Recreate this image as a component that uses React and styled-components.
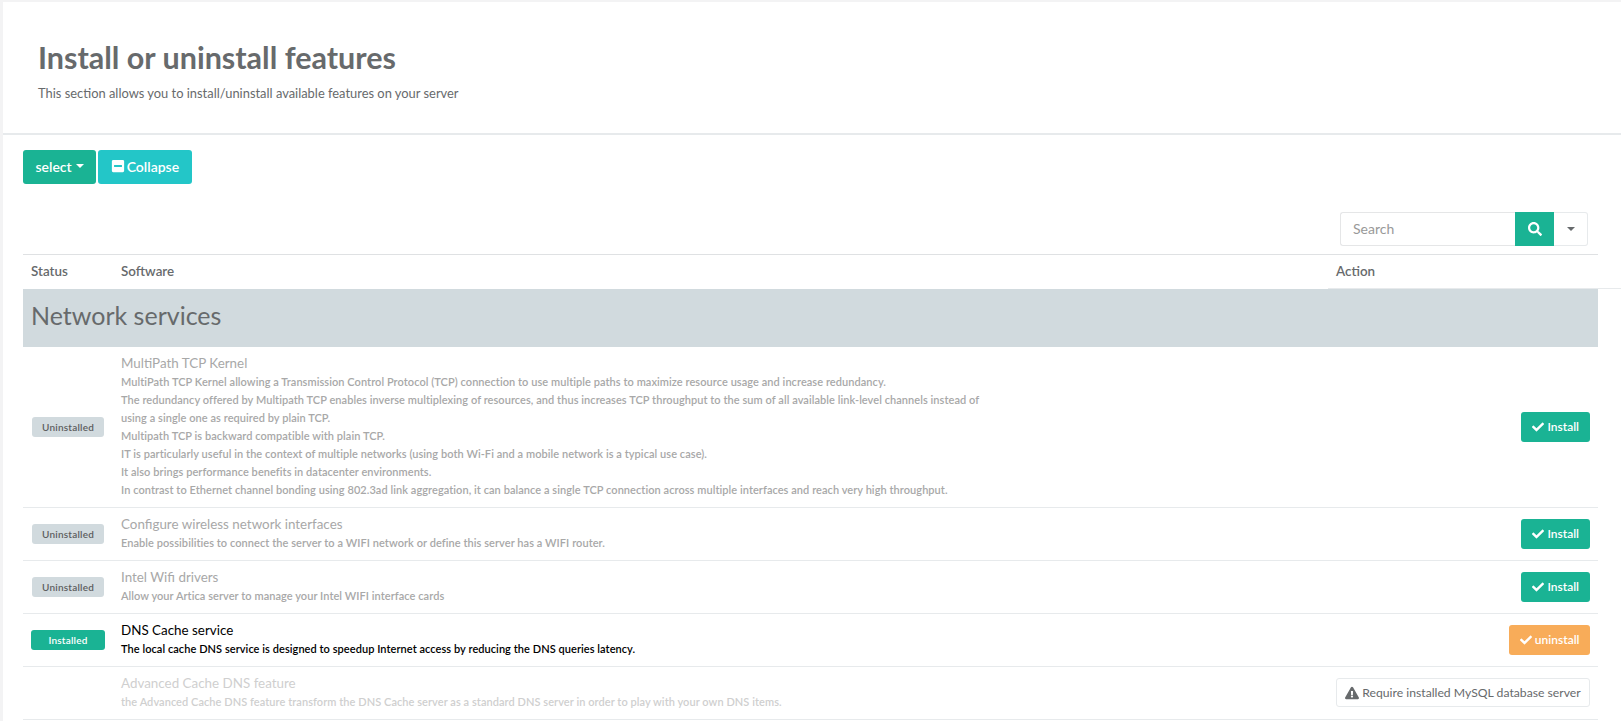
import React from "react";
import styled, { createGlobalStyle } from "styled-components";
import { FaCheck, FaExclamationTriangle, FaMinusSquare, FaSearch } from "react-icons/fa";

const Global = createGlobalStyle`
  html, body { margin: 0; padding: 0; height: 721px; overflow: hidden; background: #f3f3f4; }
  body { font-family: Lato, "Open Sans", "Liberation Sans", sans-serif; color: #676a6c; font-size: 13px; }
  * { box-sizing: border-box; }
`;
const Page = styled.div`margin: 2px 0 0 3px; background: #fff; height: 719px; overflow: hidden;`;
const Heading = styled.header`height: 133px; padding: 37px 35px 0; border-bottom: 2px solid #e7eaec;`;
const Title = styled.h1`margin: 0; font-size: 30.5px; line-height: 36px; font-weight: 700; color: #676a6c;`;
const Sub = styled.p`margin: 9px 0 0; font-size: 12.9px; line-height: 18px; color: #676a6c;`;
const Content = styled.main`padding: 15px 23px 0 20px;`;
const Toolbar = styled.div`display: flex; gap: 2px; height: 34px;`;
const ToolButton = styled.button`
  display: inline-flex; align-items: center; gap: ${p => p.$gap || 3}px; height: 34px; padding: 2px ${p => p.$pad || 12}px 4px;
  border: 0; border-radius: 3px; color: #fff; background: ${p => p.$bg};
  font: 600 14px Lato, sans-serif;
`;
const Caret = styled.span`
  display: inline-block; width: 0; height: 0; margin-left: 1px;
  border-top: 4px solid ${p => p.$color || "#fff"}; border-left: 4px solid transparent; border-right: 4px solid transparent;
`;
const SearchRow = styled.div`display: flex; justify-content: flex-end; margin: 28px 10px 8px 0;`;
const SearchInput = styled.input`
  width: 175px; height: 34px; padding: 0 12px 2px; border: 1px solid #e5e6e7; border-right: 0;
  border-radius: 3px 0 0 3px; font: 14px Lato, sans-serif; color: #676a6c; outline: none;
  &::placeholder { color: #999; }
`;
const SearchButton = styled.button`
  width: 39px; height: 34px; border: 0; background: #1ab394; color: #fff; display: flex;
  align-items: center; justify-content: center; font-size: 14px; padding: 0;
`;
const SearchMenu = styled.button`
  width: 34px; height: 34px; border: 1px solid #e7eaec; border-left: 0; border-radius: 0 3px 3px 0;
  background: #fff; display: flex; align-items: center; justify-content: center; padding: 0;
`;
const Table = styled.table`width: 1575px; border-collapse: collapse; table-layout: fixed;`;
const HeadRow = styled.tr`position: relative; border-top: 1px solid #dfe1e3;`;
const Th = styled.th`
  position: relative; height: 34px; padding: 0 8px 2px; text-align: left; font-size: 13.4px; font-weight: 600; color: #676a6c;
  ${p => p.$extend && `&::after { content: ""; position: absolute; left: 0; right: -23px; bottom: 0; height: 1px; background: #e7eaec; }`}
`;
const GroupCell = styled.td`
  height: 58px; padding: 0 8px 5px; background: #d1dade; font-size: 25px; font-weight: 400; color: #676a6c;
`;
const Row = styled.tr`border-bottom: 1px solid #e7eaec;`;
const StatusCell = styled.td`padding: 0; text-align: center; vertical-align: middle;`;
const SoftCell = styled.td`padding: 8px; vertical-align: top; color: ${p => p.$color};`;
const ActionCell = styled.td`padding: 0 8px; text-align: right; vertical-align: middle;`;
const Badge = styled.span`
  display: inline-block; height: 20px; line-height: 20px; border-radius: 3px; font-size: 10px; font-weight: 600;
  width: ${p => (p.$on ? 74 : 72)}px; text-align: center; letter-spacing: .2px;
  background: ${p => (p.$on ? "#1ab394" : "#d1dade")}; color: ${p => (p.$on ? "#fff" : "#5e5e5e")};
`;
const SoftName = styled.div`font-size: 13.4px; line-height: 18px; margin-top: -1px; margin-bottom: 1px;`;
const SoftLine = styled.div`font-size: 11px; line-height: 18px; font-weight: 600; letter-spacing: .058px;`;
const ActionButton = styled.button`
  display: inline-flex; align-items: center; justify-content: center; gap: 3px; height: 30px; padding: 0 ${p => p.$pad || 11}px;
  border: 0; border-radius: 3px; color: #fff; background: ${p => p.$bg}; font: 600 12px Lato, sans-serif;
  vertical-align: middle;
`;
const NoticeButton = styled(ActionButton)`
  height: 29px; width: 254px; padding: 0; white-space: nowrap; background: #fff; color: #676a6c; border: 1px solid #e7eaec; font-weight: 400; font-size: 12.2px;
`;

const rows = [
  { name: "MultiPath TCP Kernel", color: "#a8a8a8", lines: [
    "MultiPath TCP Kernel allowing a Transmission Control Protocol (TCP) connection to use multiple paths to maximize resource usage and increase redundancy.",
    "The redundancy offered by Multipath TCP enables inverse multiplexing of resources, and thus increases TCP throughput to the sum of all available link-level channels instead of",
    "using a single one as required by plain TCP.",
    "Multipath TCP is backward compatible with plain TCP.",
    "IT is particularly useful in the context of multiple networks (using both Wi-Fi and a mobile network is a typical use case).",
    "It also brings performance benefits in datacenter environments.",
    "In contrast to Ethernet channel bonding using 802.3ad link aggregation, it can balance a single TCP connection across multiple interfaces and reach very high throughput.",
  ], status: "Uninstalled", action: "install" },
  { name: "Configure wireless network interfaces", color: "#a8a8a8", lines: ["Enable possibilities to connect the server to a WIFI network or define this server has a WIFI router."], status: "Uninstalled", action: "install" },
  { name: "Intel Wifi drivers", color: "#a8a8a8", lines: ["Allow your Artica server to manage your Intel WIFI interface cards"], status: "Uninstalled", action: "install" },
  { name: "DNS Cache service", color: "#000", lines: ["The local cache DNS service is designed to speedup Internet access by reducing the DNS queries latency."], status: "Installed", action: "uninstall" },
  { name: "Advanced Cache DNS feature", color: "#cfcfcf", lines: ["the Advanced Cache DNS feature transform the DNS Cache server as a standard DNS server in order to play with your own DNS items."], action: "notice" },
];

function Action({ kind }) {
  if (kind === "notice") return <NoticeButton><FaExclamationTriangle size={14} /> Require installed MySQL database server</NoticeButton>;
  if (kind === "uninstall") return <ActionButton $bg="#f8ac59" $pad={10.5}><FaCheck size={12} />uninstall</ActionButton>;
  return <ActionButton $bg="#1ab394"><FaCheck size={12} />Install</ActionButton>;
}

export default function App() {
  return (
    <Page>
      <Global />
      <Heading>
        <Title>Install or uninstall features</Title>
        <Sub>This section allows you to install/uninstall available features on your server</Sub>
      </Heading>
      <Content>
        <Toolbar>
          <ToolButton $bg="#1ab394" $pad={12.5}>select <Caret /></ToolButton>
          <ToolButton $bg="#23c6c8" $pad={12.5} $gap={2}><FaMinusSquare size={14} />Collapse</ToolButton>
        </Toolbar>
        <SearchRow>
          <SearchInput placeholder="Search" />
          <SearchButton aria-label="Search"><FaSearch /></SearchButton>
          <SearchMenu aria-label="Options"><Caret $color="#676a6c" /></SearchMenu>
        </SearchRow>
        <Table>
          <colgroup>
            <col style={{ width: 90 }} />
            <col />
            <col style={{ width: 270 }} />
          </colgroup>
          <thead>
            <HeadRow>
              <Th>Status</Th>
              <Th>Software</Th>
              <Th $extend>Action</Th>
            </HeadRow>
          </thead>
          <tbody>
            <tr><GroupCell colSpan={3}>Network services</GroupCell></tr>
            {rows.map(r => (
              <Row key={r.name}>
                <StatusCell>{r.status && <Badge $on={r.status === "Installed"}>{r.status}</Badge>}</StatusCell>
                <SoftCell $color={r.color}>
                  <SoftName>{r.name}</SoftName>
                  {r.lines.map(l => <SoftLine key={l}>{l}</SoftLine>)}
                </SoftCell>
                <ActionCell><Action kind={r.action} /></ActionCell>
              </Row>
            ))}
          </tbody>
        </Table>
      </Content>
    </Page>
  );
}
